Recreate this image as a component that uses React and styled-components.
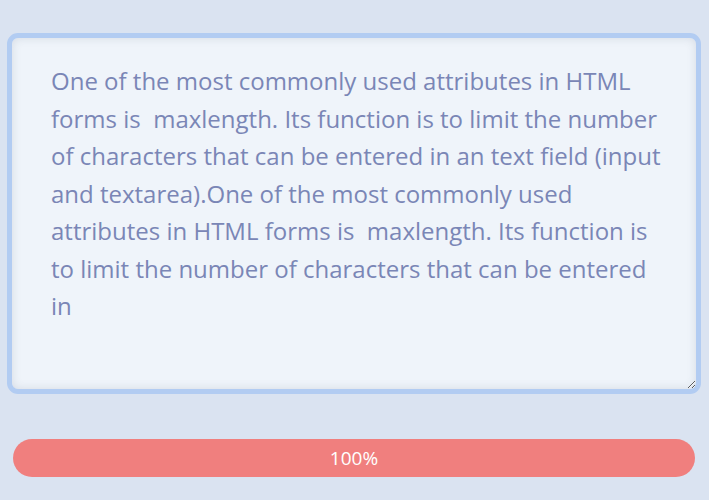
import React, { useEffect, useRef } from "react"
import styled, { createGlobalStyle } from "styled-components"

const GlobalStyle = createGlobalStyle`
  html, body {
    margin: 0;
    padding: 0;
    background: #dae3f1;
  }
`

const Page = styled.div`
  display: flex;
  flex-direction: column;
  padding: 33px 8px 0 7px;
  gap: 45px;
  font-family: "Open Sans", "Noto Sans", sans-serif;
`

const TextBox = styled.textarea`
  box-sizing: border-box;
  width: 694px;
  height: 361px;
  padding: 24px 30px 20px 39px;
  border: 5px solid #b2ccf2;
  border-radius: 11px;
  background: #eff4fa;
  box-shadow: inset 0 0 10px rgba(60, 70, 90, 0.14);
  color: #7a86b6;
  caret-color: #3c4c98;
  font-family: inherit;
  font-size: 24px;
  line-height: 37.5px;
  outline: none;
  resize: vertical;
`

const Bar = styled.div`
  margin: 0 6px;
  height: 38px;
  border-radius: 19px;
  background: #f07f7e;
  color: #fff;
  display: flex;
  align-items: center;
  justify-content: center;
  font-size: 19px;
`

const text =
  "One of the most commonly used attributes in HTML forms is  maxlength. Its function is to limit the number of characters that can be entered in an text field (input and textarea).One of the most commonly used attributes in HTML forms is  maxlength. Its function is to limit the number of characters that can be entered in"

export default function App() {
  const ref = useRef(null)
  useEffect(() => {
    const el = ref.current
    el.focus()
    el.setSelectionRange(text.length, text.length)
  }, [])
  return (
    <Page>
      <GlobalStyle />
      <TextBox ref={ref} defaultValue={text} maxLength={text.length} />
      <Bar>100%</Bar>
    </Page>
  )
}
